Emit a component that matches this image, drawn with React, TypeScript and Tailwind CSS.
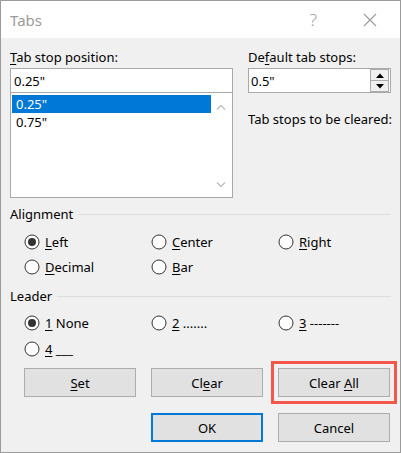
import React from "react";

function Radio({ checked }: { checked?: boolean }) {
  return (
    <svg width="16" height="16" viewBox="0 0 16 16" className="shrink-0">
      <circle cx="8" cy="8" r="7" fill="#ffffff" stroke="#333333" strokeWidth="1" />
      {checked && <circle cx="8" cy="8" r="4" fill="#333333" />}
    </svg>
  );
}

function RadioItem({ checked, children }: { checked?: boolean; children: React.ReactNode }) {
  return (
    <div className="flex items-center gap-[5px] h-full">
      <Radio checked={checked} />
      <span className="leading-[16px] whitespace-pre">{children}</span>
    </div>
  );
}

function U({ children }: { children: React.ReactNode }) {
  return <span className="underline underline-offset-2 decoration-1">{children}</span>;
}

function Btn({ children, primary }: { children: React.ReactNode; primary?: boolean }) {
  return (
    <div
      className={
        "w-[112px] h-[29px] flex items-center justify-center bg-[#e1e1e1] " +
        (primary ? "border-2 border-[#0078d7]" : "border border-[#adadad]")
      }
    >
      <span className="leading-[16px]">{children}</span>
    </div>
  );
}

export default function App() {
  return (
    <div
      className="w-[401px] h-[453px] border border-[#9b9b9b] flex flex-col text-[13px] text-black"
      style={{ fontFamily: '"Noto Sans", "Open Sans", sans-serif' }}
    >
      {/* Title bar */}
      <div className="h-[37px] bg-white flex items-center shrink-0">
        <span className="ml-[9px] text-[15px] text-[#9b9b9b] leading-[20px]">Tabs</span>
        <span className="ml-auto mr-[46px] text-[17px] text-[#9b9b9b] leading-[20px] font-light">?</span>
        <svg width="14" height="14" viewBox="0 0 14 14" className="mr-[23px]">
          <path d="M1 1 L13 13 M13 1 L1 13" stroke="#9b9b9b" strokeWidth="1.1" />
        </svg>
      </div>

      {/* Body */}
      <div className="flex-1 bg-[#f0f0f0] px-[9px] pt-[11px] flex flex-col">
        {/* Top section */}
        <div className="flex gap-[15px]">
          <div className="w-[223px] flex flex-col">
            <div className="h-[16px] leading-[16px]">
              <U>T</U>ab stop position:
            </div>
            <div className="mt-[3px] h-[25px] bg-white border border-[#a9a9a9] flex items-center pl-[3px]">
              <span className="leading-[16px]">0.25"</span>
            </div>
            <div className="h-[105px] bg-white border border-t-0 border-[#a9a9a9] flex p-[1px] pt-[2px]">
              <div className="flex-1 flex flex-col">
                <div className="h-[18px] bg-[#0078d7] text-white flex items-center pl-[4px]">
                  <span className="leading-[16px]">0.25"</span>
                </div>
                <div className="h-[18px] flex items-center pl-[4px]">
                  <span className="leading-[16px]">0.75"</span>
                </div>
              </div>
              <div className="w-[20px] flex flex-col items-center justify-between pt-[9px] pb-[8px]">
                <svg width="10" height="6" viewBox="0 0 10 6">
                  <path d="M1 5.5 L5 1.5 L9 5.5" stroke="#c2c2c2" strokeWidth="1.5" fill="none" />
                </svg>
                <svg width="10" height="6" viewBox="0 0 10 6">
                  <path d="M1 0.5 L5 4.5 L9 0.5" stroke="#c2c2c2" strokeWidth="1.5" fill="none" />
                </svg>
              </div>
            </div>
          </div>
          <div className="w-[143px] flex flex-col">
            <div className="h-[16px] leading-[16px]">
              De<U>f</U>ault tab stops:
            </div>
            <div className="mt-[3px] h-[25px] bg-white border border-[#a9a9a9] flex items-center pl-[2px]">
              <span className="leading-[16px] flex-1">0.5"</span>
              <div className="w-[19px] h-[23px] flex flex-col mr-[1px]">
                <div className="flex-1 border border-[#adadad] bg-[#f0f0f0] flex items-center justify-center">
                  <svg width="8" height="5" viewBox="0 0 8 5">
                    <path d="M0 5 L4 0.5 L8 5 Z" fill="#000" />
                  </svg>
                </div>
                <div className="flex-1 border border-t-0 border-[#adadad] bg-[#f0f0f0] flex items-center justify-center">
                  <svg width="8" height="5" viewBox="0 0 8 5">
                    <path d="M0 0 L4 4.5 L8 0 Z" fill="#000" />
                  </svg>
                </div>
              </div>
            </div>
            <div className="mt-[18px] h-[16px] leading-[16px] whitespace-nowrap">Tab stops to be cleared:</div>
          </div>
        </div>

        {/* Alignment */}
        <div className="mt-[8px] h-[16px] flex items-center">
          <span className="leading-[16px]">Alignment</span>
          <div className="flex-1 h-px bg-[#dcdcdc] ml-[5px]" />
        </div>
        <div className="mt-[7px] pl-[14px] grid grid-cols-[127px_127px_127px]">
          <div className="h-[25px]">
            <RadioItem checked>
              <U>L</U>eft
            </RadioItem>
          </div>
          <div className="h-[25px]">
            <RadioItem>
              <U>C</U>enter
            </RadioItem>
          </div>
          <div className="h-[25px]">
            <RadioItem>
              <U>R</U>ight
            </RadioItem>
          </div>
          <div className="h-[25px]">
            <RadioItem>
              <U>D</U>ecimal
            </RadioItem>
          </div>
          <div className="h-[25px]">
            <RadioItem>
              <U>B</U>ar
            </RadioItem>
          </div>
        </div>

        {/* Leader */}
        <div className="mt-[9px] h-[16px] flex items-center">
          <span className="leading-[16px]">Leader</span>
          <div className="flex-1 h-px bg-[#dcdcdc] ml-[5px]" />
        </div>
        <div className="mt-[6px] pl-[14px] grid grid-cols-[127px_127px_127px]">
          <div className="h-[26px]">
            <RadioItem checked>
              <U>1</U> None
            </RadioItem>
          </div>
          <div className="h-[26px]">
            <RadioItem>
              <U>2</U> .......
            </RadioItem>
          </div>
          <div className="h-[26px]">
            <RadioItem>
              <U>3</U> -------
            </RadioItem>
          </div>
          <div className="h-[26px]">
            <RadioItem>
              <U>4</U> ___
            </RadioItem>
          </div>
        </div>

        {/* Buttons */}
        <div className="mt-[6px] pl-[14px] flex gap-[15px]">
          <Btn>
            <U>S</U>et
          </Btn>
          <Btn>
            Cl<U>e</U>ar
          </Btn>
          <div className="outline-3 outline-[#f4564a] outline-offset-[4px]">
            <Btn>
              Clear <U>A</U>ll
            </Btn>
          </div>
        </div>
        <div className="mt-[16px] pl-[141px] flex gap-[15px]">
          <Btn primary>OK</Btn>
          <Btn>Cancel</Btn>
        </div>
      </div>
    </div>
  );
}
